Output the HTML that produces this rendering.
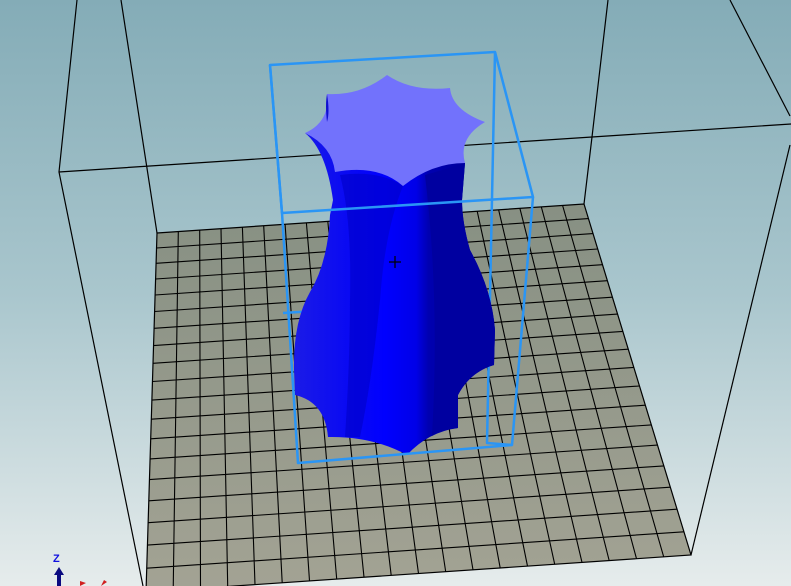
<!DOCTYPE html>
<html><head><meta charset="utf-8"><style>
html,body{margin:0;padding:0;width:791px;height:586px;overflow:hidden;background:#fff}
svg{display:block}
</style></head><body>
<svg id="s" width="791" height="586" viewBox="0 0 791 586" xmlns="http://www.w3.org/2000/svg">
<defs>
<linearGradient id="bg" x1="0" y1="0" x2="0" y2="1">
<stop offset="0" stop-color="#84acb7"/><stop offset="0.5" stop-color="#a9c6cd"/><stop offset="1" stop-color="#e6ecec"/>
</linearGradient>
<linearGradient id="pl" x1="0" y1="0" x2="0" y2="1">
<stop offset="0" stop-color="#879083"/><stop offset="1" stop-color="#a3a394"/>
</linearGradient>
<linearGradient id="bd" gradientUnits="userSpaceOnUse" x1="290" y1="0" x2="500" y2="0">
<stop offset="0" stop-color="#1c1ce6"/><stop offset="0.3" stop-color="#0808f4"/><stop offset="0.45" stop-color="#0000ff"/><stop offset="0.6" stop-color="#0000e8"/><stop offset="0.66" stop-color="#0000b0"/><stop offset="1" stop-color="#00008c"/>
</linearGradient>
</defs>
<rect width="791" height="586" fill="url(#bg)"/>
<g stroke="#000" stroke-width="1.2" fill="none">
<polyline points="77,0 59,172 143,586"/>
<polyline points="121,0 157,233"/>
<polyline points="59,172 592,137 791,124"/>
<polyline points="608,0 592,137 584,204"/>
<polyline points="730,0 790,116"/>
<polyline points="790,145 691,555"/>
</g>
<g id="plate"></g>
<g stroke="#2a95f5" stroke-width="2.5" fill="none" stroke-linejoin="round">
<polyline points="283,313 487,300"/>
<polyline points="495,52 487,443 512,445"/>
</g>
<path fill="url(#bd)" d="M305,133 Q326,150 333,200 L330,215 Q328,262 310,292 Q293,322 294,370 L295,395 Q325,402 328,437 Q372,436 407,455 Q428,432 458,428 L458,395 Q470,372 494,365 L495,330 Q492,290 470,250 Q462,222 462,200 L465,163 Z"/>
<path fill="#0000a0" d="M425,175 Q460,165 465,163 L462,200 Q462,222 470,250 Q492,290 495,330 L494,365 Q470,372 458,395 L458,428 Q440,430 432,436 Q440,300 425,175 Z"/>
<path fill="#0000c8" d="M340,175 Q380,170 403,186 Q385,230 380,300 Q372,380 360,437 L345,437 Q350,360 350,300 Q352,220 340,175 Z" opacity="0.6"/>
<path fill="#7272fc" d="M387,75 Q412,92 450,88 Q452,110 485,122 Q458,138 465,163 Q432,163 403,186 Q378,164 335,172 Q332,146 305,133 Q330,122 327,94 Q360,96 387,75 Z"/>
<path fill="#1010d0" d="M327,94 Q330,112 327,122 Q325,105 327,94Z"/>
<g stroke="#000" stroke-width="1.2"><line x1="389" y1="262" x2="401" y2="262"/><line x1="395" y1="256" x2="395" y2="268"/></g>
<g stroke="#2a95f5" stroke-width="2.5" fill="none" stroke-linejoin="round">
<polygon points="270,65 495,52 533,197 282,213"/>
<polyline points="270,65 282,213 298,463 512,445 533,197"/>
</g>
<text x="53" y="562" font-family="Liberation Sans, sans-serif" font-size="11" font-weight="bold" fill="#1010e0">Z</text>
<path d="M59,567 L64,575 L61,575 L61,586 L57,586 L57,575 L54,575 Z" fill="#0a0a80"/>
<path d="M80,586 L80,581 L86,583 Z" fill="#d02020"/>
<path d="M101,586 L104,580 L107,582 Z" fill="#d02020"/>
</svg>
<script>
(function(){
var P=[[157,233],[584,204],[691,555],[146,592]];
var x0=P[0][0],y0=P[0][1],x1=P[1][0],y1=P[1][1],x2=P[2][0],y2=P[2][1],x3=P[3][0],y3=P[3][1];
var dx1=x1-x2,dx2=x3-x2,dy1=y1-y2,dy2=y3-y2,sx=x0-x1+x2-x3,sy=y0-y1+y2-y3;
var det=dx1*dy2-dx2*dy1;
var g=(sx*dy2-dx2*sy)/det,h=(dx1*sy-sx*dy1)/det;
var a=x1-x0+g*x1,b=x3-x0+h*x3,c=x0,d=y1-y0+g*y1,e=y3-y0+h*y3,f=y0;
function m(u,v){var w=g*u+h*v+1;return [(a*u+b*v+c)/w,(d*u+e*v+f)/w];}
var ns="http://www.w3.org/2000/svg",G=document.getElementById("plate");
var poly=document.createElementNS(ns,"polygon");
poly.setAttribute("points",P.map(function(p){return p.join(",")}).join(" "));
poly.setAttribute("fill","url(#pl)");poly.setAttribute("stroke","#000");poly.setAttribute("stroke-width","1.2");
G.appendChild(poly);
var N=20,M=19,dd="";
for(var i=1;i<N;i++){var u=i/N,p=m(u,0),q=m(u,1);dd+="M"+p[0].toFixed(1)+","+p[1].toFixed(1)+"L"+q[0].toFixed(1)+","+q[1].toFixed(1);}
for(var j=1;j<M;j++){var v=j/M,p=m(0,v),q=m(1,v);dd+="M"+p[0].toFixed(1)+","+p[1].toFixed(1)+"L"+q[0].toFixed(1)+","+q[1].toFixed(1);}
var pa=document.createElementNS(ns,"path");pa.setAttribute("d",dd);pa.setAttribute("stroke","#000");pa.setAttribute("stroke-width","1.1");pa.setAttribute("fill","none");
G.appendChild(pa);
})();
</script>
</body></html>
